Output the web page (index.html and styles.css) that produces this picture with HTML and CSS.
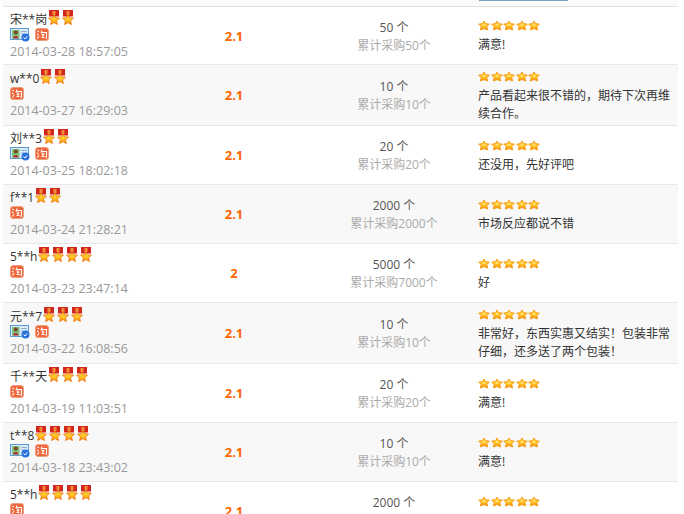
FILE: index.html
```html
<!DOCTYPE html>
<html>

<head>
    <meta charset="UTF-8">
    <title>成交记录</title>
    <link rel="stylesheet" href="styles.css">
</head>

<body>
    <svg class="defs" width="0" height="0">
        <defs>
            <linearGradient id="starfill" x1="0" y1="0" x2="0" y2="1">
                <stop offset="0" stop-color="#ffe24a"/>
                <stop offset="0.6" stop-color="#ffc01c"/>
                <stop offset="1" stop-color="#f98a0c"/>
            </linearGradient>
        </defs>
        <symbol id="medal" viewBox="0 0 14 15">
            <path d="M2 0h10v6.500H2z" fill="#d3261a"/>
            <path d="M5.500 1h3v4h-3z" fill="#f28a3c"/>
            <path d="M7 5l1.400 2.800 4.100.4-3 2.600.9 3.700L7 12.600l-3.400 1.900.9-3.700-3-2.600 4.100-.4z" fill="url(#starfill)" stroke="#f0780e" stroke-width=".9"/>
        </symbol>
        <symbol id="star" viewBox="0 0 12 11">
            <path d="M6 1l1.500 2.700 3.800.4-2.500 2.500.8 3.400L6 8.500l-3.600 1.500.8-3.400L.7 4.100l3.800-.4z" fill="url(#starfill)" stroke="#f79a18"/>
            <path d="M4.500 5h3" stroke="#fff3b0"/>
        </symbol>
        <symbol id="tao" viewBox="0 0 14 13">
            <rect x=".5" y=".5" width="13" height="12" rx="2.500" fill="#f0663a" stroke="#f0a080"/>
            <path d="M2.500 3l1.500 1M2 6l1.500 1M2.500 10.500L4 8M6 4.500h5.500V10l-1.200.5M7 2.500L6 5.500M6.500 7h3M8 5.500V9M6.500 9.500h3" fill="none" stroke="#fff" stroke-width="1.100"/>
        </symbol>
        <symbol id="idcard" viewBox="0 0 20 14">
            <rect x=".5" y=".5" width="18" height="11" fill="#dcebf8" stroke="#5b9bd5"/>
            <rect x="2" y="2" width="7.500" height="8.500" fill="#7fbf7a"/>
            <circle cx="5.800" cy="4.600" r="2" fill="#7a4526"/>
            <path d="M3 10.500c0-3.500 5.500-3.500 5.500 0z" fill="#b33030"/>
            <path d="M11 3.500h6M11 6h3" stroke="#8fb0cf"/>
            <circle cx="15.500" cy="9.500" r="4" fill="#2a72dc"/>
            <path d="M13.500 9.500l1.500 1.500 2.300-2.700" fill="none" stroke="#fff"/>
        </symbol>
    </svg>

    <div class="top-bar"><span class="top-link"></span></div>

    <table class="records">
        <tr class="h58">
            <td class="buyer">
                <div class="name">宋**岗<span class="medals"><svg><use href="#medal"/></svg><svg><use href="#medal"/></svg></span></div>
                <div class="badges"><svg class="id"><use href="#idcard"/></svg><svg class="tb"><use href="#tao"/></svg></div>
                <div class="date">2014-03-28 18:57:05</div>
            </td>
            <td class="price">2.1</td>
            <td class="qty">50 个<div class="total">累计采购50个</div></td>
            <td class="comment">
                <div class="stars"><svg><use href="#star"/></svg><svg><use href="#star"/></svg><svg><use href="#star"/></svg><svg><use href="#star"/></svg><svg><use href="#star"/></svg></div>
                <div class="words">满意!</div>
            </td>
        </tr>
        <tr class="h61 alt">
            <td class="buyer">
                <div class="name">w**0<span class="medals"><svg><use href="#medal"/></svg><svg><use href="#medal"/></svg></span></div>
                <div class="badges"><svg class="tb"><use href="#tao"/></svg></div>
                <div class="date">2014-03-27 16:29:03</div>
            </td>
            <td class="price">2.1</td>
            <td class="qty">10 个<div class="total">累计采购10个</div></td>
            <td class="comment">
                <div class="stars"><svg><use href="#star"/></svg><svg><use href="#star"/></svg><svg><use href="#star"/></svg><svg><use href="#star"/></svg><svg><use href="#star"/></svg></div>
                <div class="words">产品看起来很不错的，期待下次再维续合作。</div>
            </td>
        </tr>
        <tr class="h59">
            <td class="buyer">
                <div class="name">刘**3<span class="medals"><svg><use href="#medal"/></svg><svg><use href="#medal"/></svg></span></div>
                <div class="badges"><svg class="id"><use href="#idcard"/></svg><svg class="tb"><use href="#tao"/></svg></div>
                <div class="date">2014-03-25 18:02:18</div>
            </td>
            <td class="price">2.1</td>
            <td class="qty">20 个<div class="total">累计采购20个</div></td>
            <td class="comment">
                <div class="stars"><svg><use href="#star"/></svg><svg><use href="#star"/></svg><svg><use href="#star"/></svg><svg><use href="#star"/></svg><svg><use href="#star"/></svg></div>
                <div class="words">还没用，先好评吧</div>
            </td>
        </tr>
        <tr class="h59 alt">
            <td class="buyer">
                <div class="name">f**1<span class="medals"><svg><use href="#medal"/></svg><svg><use href="#medal"/></svg></span></div>
                <div class="badges"><svg class="tb"><use href="#tao"/></svg></div>
                <div class="date">2014-03-24 21:28:21</div>
            </td>
            <td class="price">2.1</td>
            <td class="qty">2000 个<div class="total">累计采购2000个</div></td>
            <td class="comment">
                <div class="stars"><svg><use href="#star"/></svg><svg><use href="#star"/></svg><svg><use href="#star"/></svg><svg><use href="#star"/></svg><svg><use href="#star"/></svg></div>
                <div class="words">市场反应都说不错</div>
            </td>
        </tr>
        <tr class="h59">
            <td class="buyer">
                <div class="name">5**h<span class="medals"><svg><use href="#medal"/></svg><svg><use href="#medal"/></svg><svg><use href="#medal"/></svg><svg><use href="#medal"/></svg></span></div>
                <div class="badges"><svg class="tb"><use href="#tao"/></svg></div>
                <div class="date">2014-03-23 23:47:14</div>
            </td>
            <td class="price">2</td>
            <td class="qty">5000 个<div class="total">累计采购7000个</div></td>
            <td class="comment">
                <div class="stars"><svg><use href="#star"/></svg><svg><use href="#star"/></svg><svg><use href="#star"/></svg><svg><use href="#star"/></svg><svg><use href="#star"/></svg></div>
                <div class="words">好</div>
            </td>
        </tr>
        <tr class="h61 alt">
            <td class="buyer">
                <div class="name">元**7<span class="medals"><svg><use href="#medal"/></svg><svg><use href="#medal"/></svg><svg><use href="#medal"/></svg></span></div>
                <div class="badges"><svg class="id"><use href="#idcard"/></svg><svg class="tb"><use href="#tao"/></svg></div>
                <div class="date">2014-03-22 16:08:56</div>
            </td>
            <td class="price">2.1</td>
            <td class="qty">10 个<div class="total">累计采购10个</div></td>
            <td class="comment">
                <div class="stars"><svg><use href="#star"/></svg><svg><use href="#star"/></svg><svg><use href="#star"/></svg><svg><use href="#star"/></svg><svg><use href="#star"/></svg></div>
                <div class="words">非常好，东西实惠又结实！包装非常仔细，还多送了两个包装！</div>
            </td>
        </tr>
        <tr class="h59">
            <td class="buyer">
                <div class="name">千**天<span class="medals"><svg><use href="#medal"/></svg><svg><use href="#medal"/></svg><svg><use href="#medal"/></svg></span></div>
                <div class="badges"><svg class="tb"><use href="#tao"/></svg></div>
                <div class="date">2014-03-19 11:03:51</div>
            </td>
            <td class="price">2.1</td>
            <td class="qty">20 个<div class="total">累计采购20个</div></td>
            <td class="comment">
                <div class="stars"><svg><use href="#star"/></svg><svg><use href="#star"/></svg><svg><use href="#star"/></svg><svg><use href="#star"/></svg><svg><use href="#star"/></svg></div>
                <div class="words">满意!</div>
            </td>
        </tr>
        <tr class="h59 alt">
            <td class="buyer">
                <div class="name">t**8<span class="medals"><svg><use href="#medal"/></svg><svg><use href="#medal"/></svg><svg><use href="#medal"/></svg><svg><use href="#medal"/></svg></span></div>
                <div class="badges"><svg class="id"><use href="#idcard"/></svg><svg class="tb"><use href="#tao"/></svg></div>
                <div class="date">2014-03-18 23:43:02</div>
            </td>
            <td class="price">2.1</td>
            <td class="qty">10 个<div class="total">累计采购10个</div></td>
            <td class="comment">
                <div class="stars"><svg><use href="#star"/></svg><svg><use href="#star"/></svg><svg><use href="#star"/></svg><svg><use href="#star"/></svg><svg><use href="#star"/></svg></div>
                <div class="words">满意!</div>
            </td>
        </tr>
        <tr class="h59">
            <td class="buyer">
                <div class="name">5**h<span class="medals"><svg><use href="#medal"/></svg><svg><use href="#medal"/></svg><svg><use href="#medal"/></svg><svg><use href="#medal"/></svg></span></div>
                <div class="badges"><svg class="tb"><use href="#tao"/></svg></div>
                <div class="date"></div>
            </td>
            <td class="price">2.1</td>
            <td class="qty">2000 个<div class="total"></div></td>
            <td class="comment">
                <div class="stars"><svg><use href="#star"/></svg><svg><use href="#star"/></svg><svg><use href="#star"/></svg><svg><use href="#star"/></svg><svg><use href="#star"/></svg></div>
                <div class="words"></div>
            </td>
        </tr>
    </table>
</body>

</html>
```

FILE: styles.css
```css
html,
body {
    margin: 0;
    padding: 0;
    background: #fff;
    overflow: hidden;
    height: 514px;
}

body {
    font-family: "Open Sans", "Noto Sans CJK SC", sans-serif;
    font-size: 12px;
    color: #333;
}

.defs {
    position: absolute;
}

.top-bar {
    height: 6px;
    margin: 0 6px 0 3px;
    background: #fafafa;
    border-bottom: 1px solid #e2e2e2;
}

.top-link {
    display: block;
    width: 89px;
    height: 1px;
    margin-left: 476px;
    background: #7c9fc4;
}

.records {
    width: 675px;
    margin-left: 3px;
    border-collapse: separate;
    border-spacing: 0;
    table-layout: fixed;
}

.records td {
    box-sizing: border-box;
    padding: 0;
    border-bottom: 1px solid #e8e8e8;
    vertical-align: middle;
    overflow: hidden;
}

.h58 td { height: 58px; }
.h59 td { height: 59px; }
.h61 td { height: 61px; }

.alt td {
    background: #f8f8f8;
}

.records .buyer {
    width: 130px;
    padding-left: 7px;
    overflow: visible;
}

.name {
    height: 14px;
    line-height: 16px;
    white-space: nowrap;
}

.medals svg {
    width: 14px;
    height: 15px;
    vertical-align: top;
    margin-top: -2px;
}

.badges {
    height: 14px;
    margin-top: 2px;
}

.badges svg {
    display: inline-block;
    vertical-align: top;
}

.badges .id {
    width: 20px;
    height: 14px;
    margin-right: 5px;
}

.badges .tb {
    width: 14px;
    height: 13px;
}

.date {
    height: 16px;
    margin-top: 2px;
    line-height: 16px;
    font-size: 12.500px;
    color: #999;
    white-space: nowrap;
}

.records .price {
    width: 202px;
    text-align: center;
    font-weight: bold;
    font-size: 13px;
    color: #f60;
}

.records .qty {
    width: 118px;
    padding-top: 2px;
    text-align: center;
    line-height: 18px;
    color: #555;
}

.total {
    height: 18px;
    color: #aaa;
}

.records .comment {
    padding: 3px 8px 0 25px;
    line-height: 18px;
}

.stars {
    height: 16px;
    line-height: 0;
}

.stars svg {
    width: 12px;
    height: 11px;
    margin-right: 0.500px;
}

.words {
    min-height: 18px;
}
```
